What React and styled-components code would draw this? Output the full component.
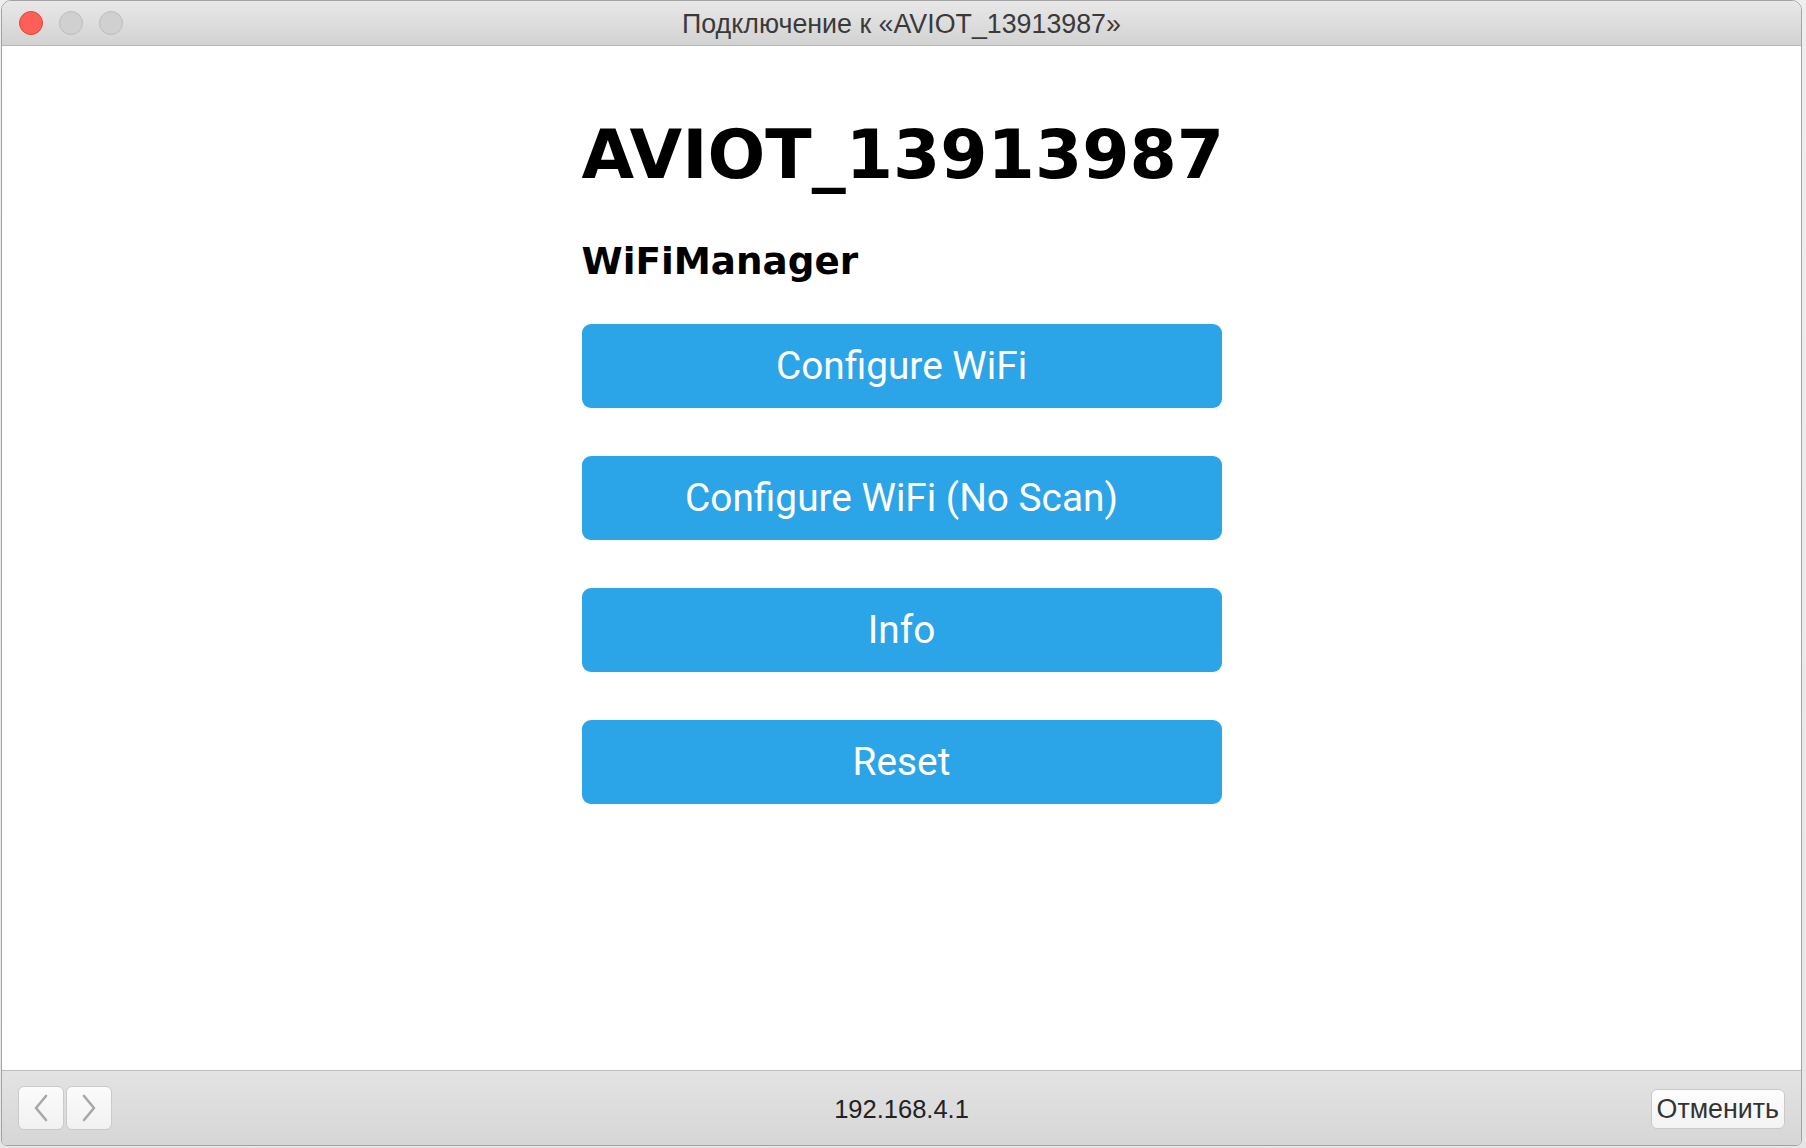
import React from "react";
import styled, { createGlobalStyle } from "styled-components";

const Global = createGlobalStyle`
  html, body { margin: 0; padding: 0; }
  body {
    background: #ececec;
    width: 1806px;
    height: 1148px;
    overflow: hidden;
  }
  * { box-sizing: border-box; }
`;

const Desktop = styled.div`
  width: 1806px;
  height: 1148px;
  padding: 0 4px 2px 1px;
  background: linear-gradient(180deg, #eeeeee 0%, #e6e6e6 100%);
`;

const Window = styled.div`
  width: 1801px;
  height: 1146px;
  display: flex;
  flex-direction: column;
  border: 1px solid #a3a3a3;
  border-radius: 10px 10px 6px 6px;
  overflow: hidden;
  background: #ffffff;
`;

const TitleBar = styled.div`
  flex: 0 0 45px;
  display: grid;
  grid-template-columns: 1fr auto 1fr;
  align-items: center;
  padding: 0 17px;
  background: linear-gradient(180deg, #e9e8e9 0%, #d3d2d3 100%);
  border-bottom: 1px solid #b6b6b6;
`;

const Lights = styled.div`
  display: flex;
  gap: 16px;
  align-items: center;
`;

const Light = styled.span`
  width: 24px;
  height: 24px;
  border-radius: 50%;
  background: ${(p) => (p.$red ? "#fe5f57" : "#d0d0d0")};
  border: 1px solid ${(p) => (p.$red ? "#e1463e" : "#bdbdbd")};
`;

const WindowTitle = styled.div`
  font-family: "Liberation Sans", Arial, sans-serif;
  font-size: 26.8px;
  color: #3a3a3a;
  white-space: nowrap;
  padding-top: 2px;
`;

const Content = styled.main`
  flex: 1;
  display: flex;
  justify-content: center;
  background: #ffffff;
`;

const Column = styled.div`
  width: 640px;
  padding-top: 69px;
  display: flex;
  flex-direction: column;
`;

const Heading = styled.h1`
  margin: 0;
  font-family: "DejaVu Sans", Verdana, sans-serif;
  font-weight: bold;
  font-size: 68px;
  line-height: 80px;
  color: #000;
  white-space: nowrap;
`;

const SubHeading = styled.h3`
  margin: 44px 0 41px;
  font-family: "DejaVu Sans", Verdana, sans-serif;
  font-weight: bold;
  font-size: 37.3px;
  line-height: 44px;
  color: #000;
`;

const ButtonList = styled.div`
  display: flex;
  flex-direction: column;
  gap: 48px;
`;

const ActionButton = styled.button`
  width: 100%;
  height: 84px;
  border: 0;
  border-radius: 9px;
  background: #2ca4e8;
  color: #ffffff;
  font-family: Roboto, "Liberation Sans", Arial, sans-serif;
  font-size: 38.8px;
  line-height: 84px;
  padding: 0 0 2px;
  cursor: pointer;
`;

const BottomBar = styled.footer`
  flex: 0 0 75px;
  display: grid;
  grid-template-columns: 1fr auto 1fr;
  align-items: center;
  padding: 0 16px;
  background: linear-gradient(180deg, #e3e3e3 0%, #d6d6d6 100%);
  border-top: 1px solid #bdbdbd;
`;

const NavGroup = styled.div`
  display: flex;
  gap: 2px;
`;

const NavButton = styled.button`
  width: 46px;
  height: 44px;
  border: 1px solid #cacaca;
  border-radius: 6px;
  background: linear-gradient(180deg, #fbfbfb 0%, #f1f1f1 100%);
  display: flex;
  align-items: center;
  justify-content: center;
  padding: 0;
`;

const Url = styled.div`
  font-family: "Liberation Sans", Arial, sans-serif;
  font-size: 25.5px;
  color: #222222;
  padding-top: 3px;
`;

const CancelButton = styled.button`
  justify-self: end;
  height: 40px;
  padding: 0 5px;
  margin-top: 2px;
  border: 1px solid #c9c9c9;
  border-radius: 6px;
  background: linear-gradient(180deg, #fdfdfd 0%, #f3f3f3 100%);
  font-family: "Liberation Sans", Arial, sans-serif;
  font-size: 26.8px;
  color: #333333;
  display: flex;
  align-items: center;
`;

const Chevron = ({ dir }) => (
  <svg width="18" height="30" viewBox="0 0 18 30" fill="none">
    <path
      d={dir === "left" ? "M14 3 L4 15 L14 27" : "M4 3 L14 15 L4 27"}
      stroke="#a8a8a8"
      strokeWidth="2.6"
      strokeLinecap="round"
      strokeLinejoin="round"
    />
  </svg>
);

const buttons = ["Configure WiFi", "Configure WiFi (No Scan)", "Info", "Reset"];

export default function App() {
  return (
    <>
      <Global />
      <Desktop>
        <Window>
          <TitleBar>
            <Lights>
              <Light $red />
              <Light />
              <Light />
            </Lights>
            <WindowTitle>Подключение к «AVIOT_13913987»</WindowTitle>
            <div />
          </TitleBar>
          <Content>
            <Column>
              <Heading>AVIOT_13913987</Heading>
              <SubHeading>WiFiManager</SubHeading>
              <ButtonList>
                {buttons.map((b) => (
                  <ActionButton key={b}>{b}</ActionButton>
                ))}
              </ButtonList>
            </Column>
          </Content>
          <BottomBar>
            <NavGroup>
              <NavButton>
                <Chevron dir="left" />
              </NavButton>
              <NavButton>
                <Chevron dir="right" />
              </NavButton>
            </NavGroup>
            <Url>192.168.4.1</Url>
            <CancelButton>Отменить</CancelButton>
          </BottomBar>
        </Window>
      </Desktop>
    </>
  );
}
